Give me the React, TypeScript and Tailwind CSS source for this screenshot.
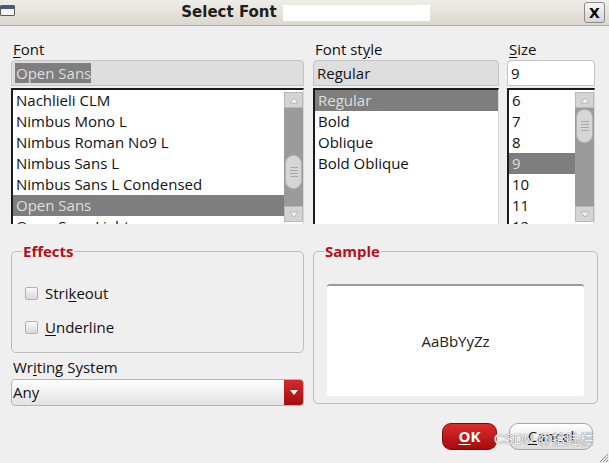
const fonts = ["Nachlieli CLM", "Nimbus Mono L", "Nimbus Roman No9 L", "Nimbus Sans L", "Nimbus Sans L Condensed", "Open Sans", "Open Sans Light"]
const styles = ["Regular", "Bold", "Oblique", "Bold Oblique"]
const sizes = ["6", "7", "8", "9", "10", "11", "12"]

const ScrollBar = ({ thumbTop }: { thumbTop: number }) => (
    <div className="w-[19px] shrink-0 self-stretch my-[2px] bg-[#9b9b9b] flex flex-col">
        <div className="h-[16px] bg-[#d4d4d4] border border-[#b8b8b8] flex items-center justify-center">
            <svg width="10" height="7" viewBox="0 0 10 7"><path d="M1 6 L5 1 L9 6 Z" fill="#f4f4f4" stroke="#a0a0a0" strokeWidth="0.6" /></svg>
        </div>
        <div className="flex-1 relative">
            <div className="absolute left-[1px] right-[1px] h-[34px] rounded-[8px] bg-[#d6d6d6] border border-[#b0b0b0] flex flex-col items-center justify-center gap-[2px]" style={{ top: thumbTop }}>
                <div className="w-[8px] h-px bg-[#a8a8a8]" />
                <div className="w-[8px] h-px bg-[#a8a8a8]" />
                <div className="w-[8px] h-px bg-[#a8a8a8]" />
                <div className="w-[8px] h-px bg-[#a8a8a8]" />
            </div>
        </div>
        <div className="h-[16px] bg-[#d4d4d4] border border-[#b8b8b8] flex items-center justify-center">
            <svg width="10" height="7" viewBox="0 0 10 7"><path d="M1 1 L5 6 L9 1 Z" fill="#f4f4f4" stroke="#a0a0a0" strokeWidth="0.6" /></svg>
        </div>
    </div>
)

const ListBox = ({ items, selected, scroll }: { items: string[]; selected: string; scroll?: number }) => (
    <div className="h-[136px] mt-[2px] bg-white border-t-2 border-l-2 border-[#1a1a1a] border-r border-r-[#d8d8d8] flex overflow-hidden">
        <div className="flex-1 min-w-0">
            {items.map((it) => (
                <div key={it} className={`h-[21px] leading-[21px] pl-[3px] whitespace-nowrap ${it === selected ? "bg-[#7e7e7e] text-[#dedede]" : "text-[#111]"}`}>
                    {it}
                </div>
            ))}
        </div>
        {scroll !== undefined && <ScrollBar thumbTop={scroll} />}
    </div>
)

const Field = ({ children, white }: { children: React.ReactNode; white?: boolean }) => (
    <div className={`h-[26px] rounded-t-[4px] border border-[#c4c4c4] flex items-center px-[3px] ${white ? "bg-white" : "bg-[#dedede]"}`}>
        {children}
    </div>
)

export default function App() {
    return (
        <div className="w-[609px] h-[463px] bg-[#efefef] relative overflow-hidden text-[15px] text-[#111]" style={{ fontFamily: '"Open Sans", sans-serif' }}>
            {/* title bar */}
            <div className="h-[26px] bg-linear-to-b from-[#efede8] to-[#dcd8cf] border-b border-[#b5b0a6] flex items-center relative">
                <div className="absolute left-0 top-[5px] w-[15px] h-[11px] border border-[#5a5a5a] bg-[#f4f4f4] rounded-[1px]">
                    <div className="h-[3px] bg-[#4a5a7a]" />
                </div>
                <div className="flex-1 flex justify-center items-center gap-[6px] pl-[2px]">
                    <span className="font-bold text-[15px] text-[#1e1e1e]" style={{ fontFamily: '"DejaVu Sans", sans-serif' }}>Select Font</span>
                    <div className="w-[147px] h-[16px] bg-white" />
                </div>
                <div className="absolute right-[4px] top-[2px] w-[21px] h-[21px] rounded-[3px] border border-[#8a8a8a] bg-linear-to-b from-[#f6f6f6] to-[#d6d6d6] flex items-center justify-center">
                    <span className="font-bold text-[14px] leading-none text-black" style={{ fontFamily: '"DejaVu Sans", sans-serif' }}>X</span>
                </div>
            </div>

            <div className="pl-[11px] pr-[11px] pt-[13px]">
                {/* top row */}
                <div className="flex gap-[9px]">
                    <div className="w-[293px]">
                        <div className="h-[21px] pl-[2px] leading-[20px]"><span className="underline underline-offset-2">F</span>ont</div>
                        <Field>
                            <span className="bg-[#7e7e7e] text-[#dedede] pl-[1px] leading-[20px]">Open Sans</span>
                        </Field>
                        <ListBox items={fonts} selected="Open Sans" scroll={47} />
                    </div>
                    <div className="w-[186px]">
                        <div className="h-[21px] pl-[2px] leading-[20px]">Font st<span className="underline underline-offset-2">y</span>le</div>
                        <Field>Regular</Field>
                        <ListBox items={styles} selected="Regular" />
                    </div>
                    <div className="w-[88px] ml-[-1px]">
                        <div className="h-[21px] pl-[2px] leading-[20px]"><span className="underline underline-offset-2">S</span>ize</div>
                        <Field white>9</Field>
                        <ListBox items={sizes} selected="9" scroll={1} />
                    </div>
                </div>

                {/* lower area */}
                <div className="flex gap-[9px] mt-[20px]">
                    <div className="w-[293px]">
                        <fieldset className="h-[109px] border border-[#bdbdbd] rounded-[5px] pl-[13px] pt-[24px] m-0">
                            <legend className="ml-[-3px] px-[1px] text-[#b3121b] font-bold text-[15px] leading-[15px]">Effects</legend>
                            <div className="flex flex-col gap-[14px]">
                                <label className="flex items-center gap-[7px] h-[20px]">
                                    <span className="w-[13px] h-[13px] rounded-[2px] border border-[#b0b0b0] bg-linear-to-b from-[#fafafa] to-[#d8d8d8]" />
                                    <span>Stri<span className="underline underline-offset-2">k</span>eout</span>
                                </label>
                                <label className="flex items-center gap-[7px] h-[20px]">
                                    <span className="w-[13px] h-[13px] rounded-[2px] border border-[#b0b0b0] bg-linear-to-b from-[#fafafa] to-[#d8d8d8]" />
                                    <span><span className="underline underline-offset-2">U</span>nderline</span>
                                </label>
                            </div>
                        </fieldset>
                        <div className="h-[22px] mt-[3px] pl-[2px] leading-[22px]">Wr<span className="underline underline-offset-2">i</span>ting System</div>
                        <div className="h-[27px] mt-[1px] rounded-[4px] border border-[#b4b4b4] bg-linear-to-b from-[#ffffff] to-[#e2e2e2] flex items-center">
                            <span className="flex-1 pl-[1px]">Any</span>
                            <div className="w-[19px] h-[25px] rounded-r-[3px] bg-linear-to-b from-[#d42a2a] to-[#a30c0c] flex items-center justify-center">
                                <svg width="8" height="5" viewBox="0 0 8 5"><path d="M0 0 L8 0 L4 5 Z" fill="#fff" /></svg>
                            </div>
                        </div>
                    </div>
                    <div className="w-[285px]">
                        <fieldset className="h-[160px] border border-[#bdbdbd] rounded-[5px] px-[13px] pt-[25px] m-0">
                            <legend className="ml-[-3px] px-[1px] text-[#b3121b] font-bold text-[15px] leading-[15px]">Sample</legend>
                            <div className="h-[112px] bg-white rounded-[3px] border-t-2 border-[#9a9a9a] flex items-center justify-center text-[#222]">
                                AaBbYyZz
                            </div>
                        </fieldset>
                    </div>
                </div>

                {/* buttons */}
                <div className="flex justify-end gap-[12px] mt-[17px] pr-[5px]">
                    <button className="w-[55px] h-[27px] rounded-[9px] border border-[#7d0a0a] bg-linear-to-b from-[#dc2b2b] to-[#a50a0a] text-white font-bold text-[15px]">
                        <span className="underline underline-offset-2">O</span>K
                    </button>
                    <button className="w-[84px] h-[27px] rounded-[9px] border border-[#a8a8a8] bg-linear-to-b from-[#ffffff] to-[#dcdcdc] text-[#111] text-[15px]">
                        <span className="underline underline-offset-2">C</span>ancel
                    </button>
                </div>
            </div>

            {/* watermark */}
            <div className="absolute left-[494px] top-[429px] text-[14px] text-[#f4f4f4] pointer-events-none" style={{ fontFamily: '"Liberation Sans", "Noto Sans CJK SC", sans-serif', textShadow: "0 0 1px #777, 0 0 1px #777" }}>
                CSDN @拾陆楼
            </div>
            {/* resize grip */}
            <svg className="absolute right-0 bottom-0" width="12" height="12" viewBox="0 0 12 12">
                <path d="M11 3 L3 11 M11 6 L6 11 M11 9 L9 11" stroke="#888" strokeWidth="1" />
            </svg>
        </div>
    )
}
